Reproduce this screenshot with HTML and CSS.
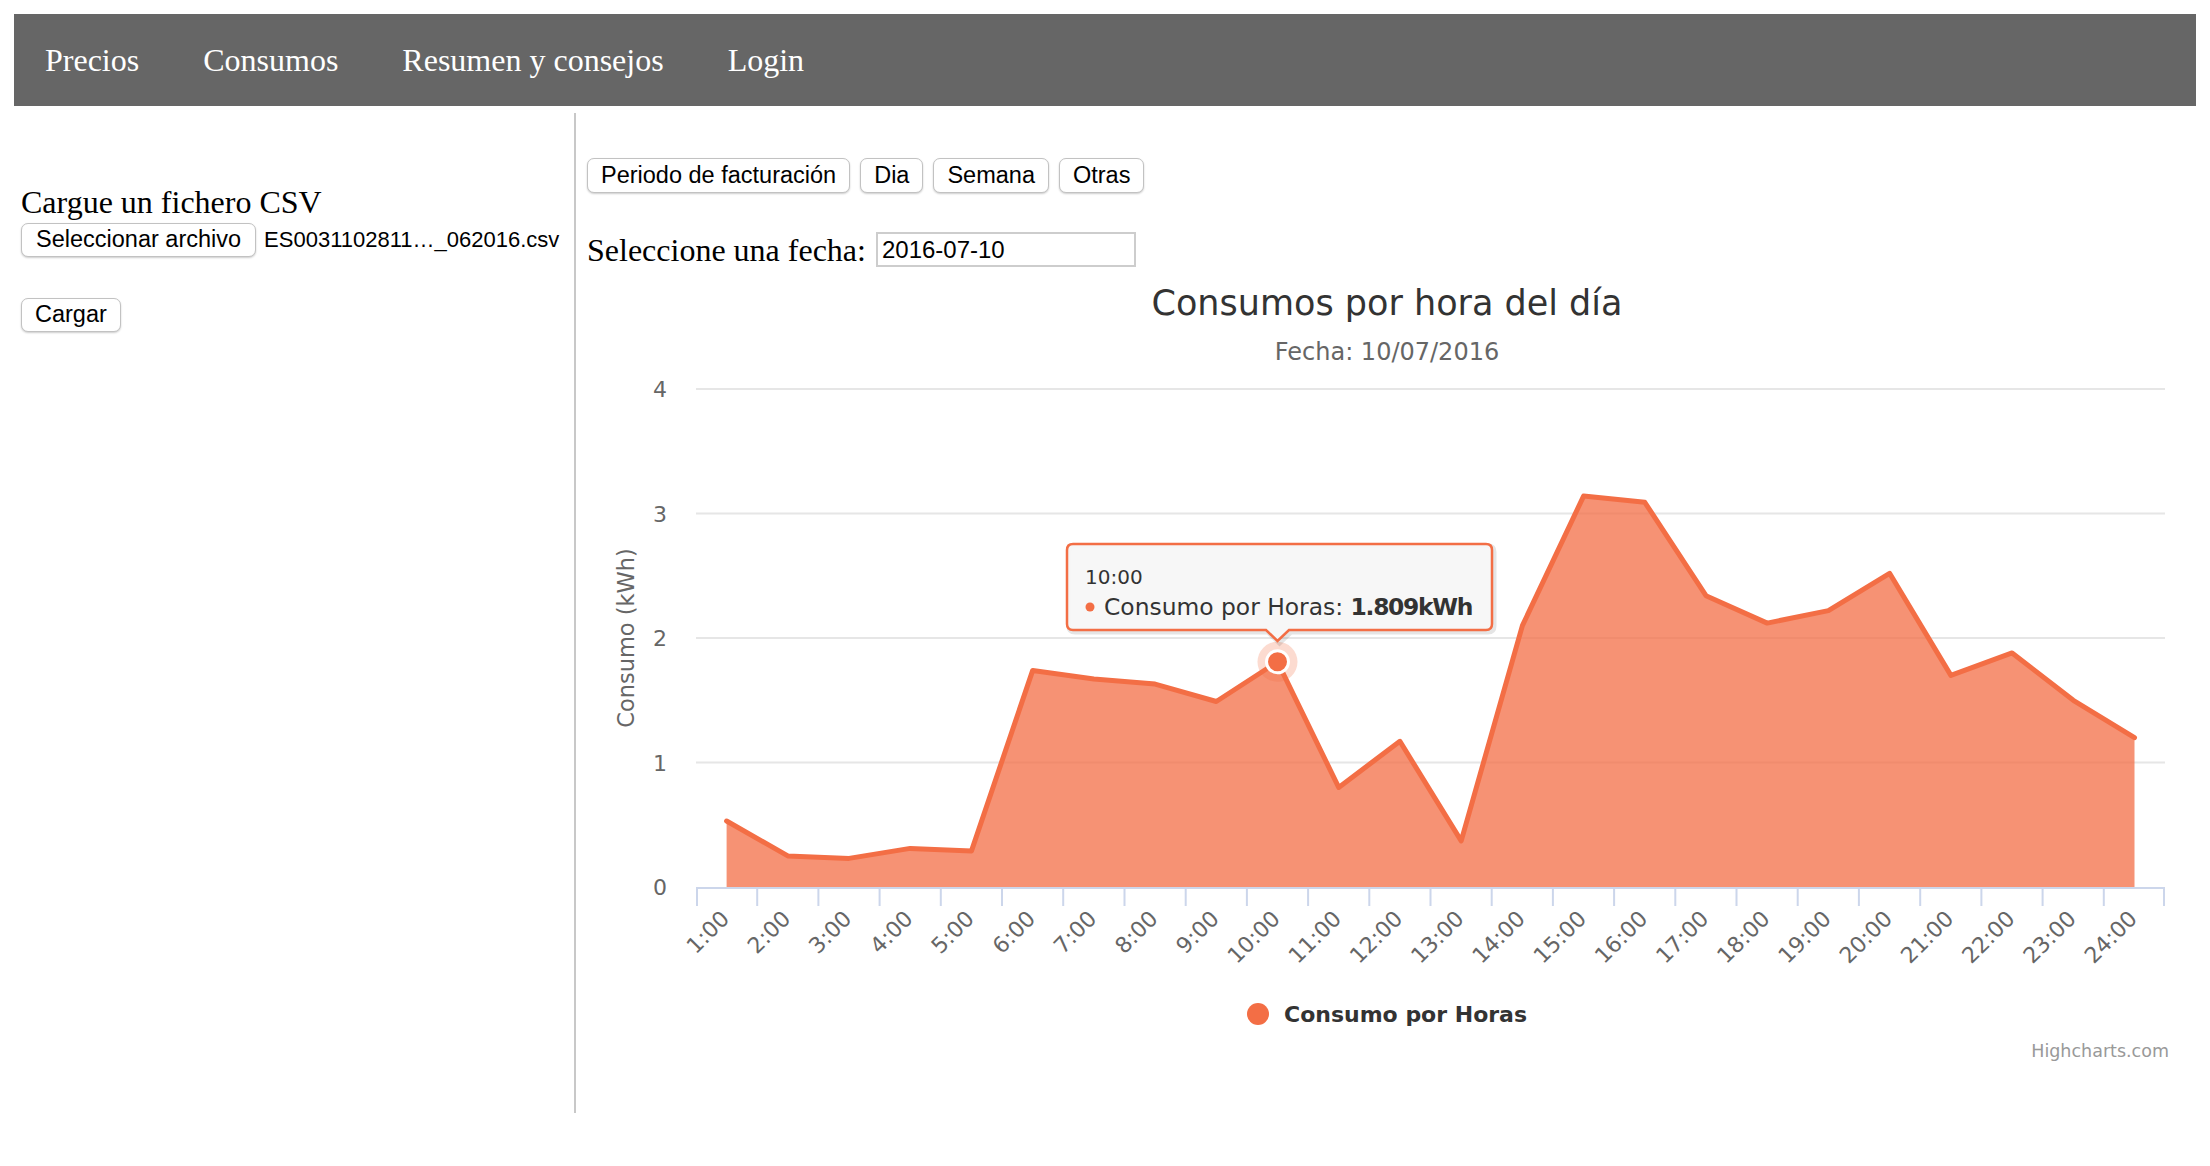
FILE: index.html
```html
<!DOCTYPE html>
<html lang="es">
<head>
<meta charset="utf-8">
<title>Consumos</title>
<link rel="stylesheet" href="styles.css">
</head>
<body>
<nav class="topnav">
  <ul>
    <li>Precios</li>
    <li>Consumos</li>
    <li>Resumen y consejos</li>
    <li>Login</li>
  </ul>
</nav>
<div class="main">
  <aside class="left">
    <p class="upload-label">Cargue un fichero CSV</p>
    <div class="file-row">
      <button class="btn">Seleccionar archivo</button>
      <span class="file-name">ES0031102811…_062016.csv</span>
    </div>
    <button class="btn btn-load">Cargar</button>
  </aside>
  <section class="right">
    <div class="btn-row">
      <button class="btn">Periodo de facturación</button>
      <button class="btn">Dia</button>
      <button class="btn">Semana</button>
      <button class="btn">Otras</button>
    </div>
    <div class="date-row">
      <label class="date-label">Seleccione una fecha:</label>
      <input class="date-input" type="text" value="2016-07-10">
    </div>
    <svg class="chart" width="1604" height="840" viewBox="0 0 1604 840" xmlns="http://www.w3.org/2000/svg">
      <text class="hc-title" x="800" y="46" text-anchor="middle">Consumos por hora del día</text>
      <text class="hc-sub" x="800" y="91" text-anchor="middle">Fecha: 10/07/2016</text>

      <g class="hc-grid">
        <path d="M109 120H1578M109 244.5H1578M109 369H1578M109 493.5H1578"/>
      </g>

      <g class="hc-ylabels">
        <text x="80" y="128" text-anchor="end">4</text>
        <text x="80" y="252.5" text-anchor="end">3</text>
        <text x="80" y="377" text-anchor="end">2</text>
        <text x="80" y="501.5" text-anchor="end">1</text>
        <text x="80" y="626" text-anchor="end">0</text>
      </g>
      <text class="hc-ytitle" x="47" y="369" text-anchor="middle" transform="rotate(-90 47 369)">Consumo (kWh)</text>

      <polygon class="hc-area" points="139.6,618 139.6,552.0 200.8,586.9 262.0,589.4 323.2,579.4 384.5,581.9 445.7,401.4 506.9,410.1 568.1,415.1 629.3,432.5 690.5,392.8 751.7,518.4 812.9,472.3 874.2,571.9 935.4,356.6 996.6,227.1 1057.8,233.3 1119.0,326.7 1180.2,354.1 1241.4,341.6 1302.6,304.3 1363.9,406.4 1425.1,383.9 1486.3,431.3 1547.5,468.6 1547.5,618"/>
      <polyline class="hc-line" points="139.6,552.0 200.8,586.9 262.0,589.4 323.2,579.4 384.5,581.9 445.7,401.4 506.9,410.1 568.1,415.1 629.3,432.5 690.5,392.8 751.7,518.4 812.9,472.3 874.2,571.9 935.4,356.6 996.6,227.1 1057.8,233.3 1119.0,326.7 1180.2,354.1 1241.4,341.6 1302.6,304.3 1363.9,406.4 1425.1,383.9 1486.3,431.3 1547.5,468.6"/>

      <path class="hc-axis" d="M109 619H1578"/>
      <path class="hc-ticks" d="M110 619V637M170.2 619V637M231.4 619V637M292.6 619V637M353.8 619V637M415 619V637M476.2 619V637M537.5 619V637M598.7 619V637M659.9 619V637M721.1 619V637M782.3 619V637M843.5 619V637M904.7 619V637M965.9 619V637M1027.1 619V637M1088.3 619V637M1149.5 619V637M1210.7 619V637M1271.9 619V637M1333.2 619V637M1394.4 619V637M1455.6 619V637M1516.8 619V637M1577 619V637"/>

      <g class="hc-xlabels">
        <text x="143.6" y="651" transform="rotate(-45 143.6 651)">1:00</text>
        <text x="204.8" y="651" transform="rotate(-45 204.8 651)">2:00</text>
        <text x="266.0" y="651" transform="rotate(-45 266.0 651)">3:00</text>
        <text x="327.2" y="651" transform="rotate(-45 327.2 651)">4:00</text>
        <text x="388.5" y="651" transform="rotate(-45 388.5 651)">5:00</text>
        <text x="449.7" y="651" transform="rotate(-45 449.7 651)">6:00</text>
        <text x="510.9" y="651" transform="rotate(-45 510.9 651)">7:00</text>
        <text x="572.1" y="651" transform="rotate(-45 572.1 651)">8:00</text>
        <text x="633.3" y="651" transform="rotate(-45 633.3 651)">9:00</text>
        <text x="694.5" y="651" transform="rotate(-45 694.5 651)">10:00</text>
        <text x="755.7" y="651" transform="rotate(-45 755.7 651)">11:00</text>
        <text x="816.9" y="651" transform="rotate(-45 816.9 651)">12:00</text>
        <text x="878.2" y="651" transform="rotate(-45 878.2 651)">13:00</text>
        <text x="939.4" y="651" transform="rotate(-45 939.4 651)">14:00</text>
        <text x="1000.6" y="651" transform="rotate(-45 1000.6 651)">15:00</text>
        <text x="1061.8" y="651" transform="rotate(-45 1061.8 651)">16:00</text>
        <text x="1123.0" y="651" transform="rotate(-45 1123.0 651)">17:00</text>
        <text x="1184.2" y="651" transform="rotate(-45 1184.2 651)">18:00</text>
        <text x="1245.4" y="651" transform="rotate(-45 1245.4 651)">19:00</text>
        <text x="1306.6" y="651" transform="rotate(-45 1306.6 651)">20:00</text>
        <text x="1367.9" y="651" transform="rotate(-45 1367.9 651)">21:00</text>
        <text x="1429.1" y="651" transform="rotate(-45 1429.1 651)">22:00</text>
        <text x="1490.3" y="651" transform="rotate(-45 1490.3 651)">23:00</text>
        <text x="1551.5" y="651" transform="rotate(-45 1551.5 651)">24:00</text>
      </g>

      <circle class="hc-halo" cx="690.5" cy="392.8" r="20"/>
      <circle class="hc-marker" cx="690.5" cy="392.8" r="11"/>

      <g class="hc-legend">
        <circle cx="671" cy="745" r="11"/>
        <text x="697" y="753">Consumo por Horas</text>
      </g>
      <text class="hc-credits" x="1582" y="788" text-anchor="end">Highcharts.com</text>

      <g class="hc-tooltip">
        <path class="hc-tip-shadow" transform="translate(2 2)" d="M486 275H899Q905 275 905 281V355Q905 361 899 361H702L690.5 372L679 361H486Q480 361 480 355V281Q480 275 486 275Z"/>
        <path class="hc-tip-box" d="M486 275H899Q905 275 905 281V355Q905 361 899 361H702L690.5 372L679 361H486Q480 361 480 355V281Q480 275 486 275Z"/>
        <text class="hc-tip-head" x="498" y="315">10:00</text>
        <circle class="hc-tip-dot" cx="503" cy="338" r="4.5"/>
        <text class="hc-tip-body" x="517" y="346">Consumo por Horas: <tspan class="hc-tip-val">1.809kWh</tspan></text>
      </g>
    </svg>
  </section>
</div>
</body>
</html>
```

FILE: styles.css
```css
html, body {
  background: #fff;
}

body {
  margin: 14px 14px 0 14px;
  font-family: "Liberation Serif", "Times New Roman", serif;
  font-size: 32px;
  color: #000;
}

.topnav {
  background: #666666;
  height: 92px;
}

.topnav ul {
  list-style: none;
  margin: 0;
  padding: 0;
  display: flex;
  align-items: center;
  height: 100%;
}

.topnav li {
  color: #fff;
  padding: 0 33px 0 31px;
  line-height: 36px;
  white-space: nowrap;
}

.main {
  display: flex;
  margin-top: 7px;
  height: 1000px;
}

.left {
  width: 560px;
  flex: none;
  box-sizing: border-box;
  padding-left: 7px;
}

.upload-label {
  margin: 71px 0 3px;
  line-height: 36px;
}

.file-row {
  display: flex;
  align-items: center;
  gap: 8px;
}

.file-name {
  font-family: "Liberation Sans", Arial, sans-serif;
  font-size: 22px;
  color: #000;
}

.btn {
  font-family: "Liberation Sans", Arial, sans-serif;
  font-size: 23.5px;
  line-height: 1;
  height: 34px;
  padding: 0 14px;
  margin: 0;
  color: #000;
  background: #fff;
  border: 1px solid #c2c2c2;
  border-radius: 7px;
  box-shadow: 0 1px 2px rgba(0, 0, 0, 0.2);
  white-space: nowrap;
}

.btn-load {
  display: block;
  margin-top: 41px;
  padding: 0 13px;
}

.right {
  flex: 1;
  border-left: 2px solid #c8c8c8;
  padding-left: 11px;
  min-width: 0;
}

.btn-row {
  display: flex;
  gap: 10px;
  margin-top: 45px;
}

.btn-row .btn {
  height: 35px;
  padding: 0 13px;
}

.date-row {
  display: flex;
  align-items: center;
  margin-top: 39px;
  height: 35px;
}

.date-label {
  margin-right: 10px;
  line-height: 36px;
  white-space: nowrap;
}

.date-input {
  width: 260px;
  height: 35px;
  box-sizing: border-box;
  border: 2px solid #cdcdcd;
  padding: 0 4px;
  margin: 0;
  font-family: "Liberation Sans", Arial, sans-serif;
  font-size: 24px;
  color: #000;
  background: #fff;
  outline: none;
}

.chart {
  display: block;
  margin-top: 2px;
  width: 1604px;
  height: 840px;
}

.chart text {
  font-family: "DejaVu Sans", Verdana, sans-serif;
}

.hc-title {
  font-size: 35px;
  fill: #333333;
}

.hc-sub {
  font-size: 24px;
  fill: #666666;
}

.hc-grid path {
  stroke: #e6e6e6;
  stroke-width: 2;
  fill: none;
}

.hc-ylabels text {
  font-size: 22px;
  fill: #666666;
}

.hc-ytitle {
  font-size: 22.5px;
  fill: #666666;
}

.hc-area {
  fill: #f36e45;
  fill-opacity: 0.75;
  stroke: none;
}

.hc-line {
  fill: none;
  stroke: #f36e45;
  stroke-width: 5;
  stroke-linejoin: round;
  stroke-linecap: round;
}

.hc-axis {
  stroke: #ccd6eb;
  stroke-width: 2;
  fill: none;
}

.hc-ticks {
  stroke: #ccd6eb;
  stroke-width: 2;
  fill: none;
}

.hc-xlabels text {
  font-size: 22px;
  fill: #666666;
  text-anchor: end;
}

.hc-halo {
  fill: #f36e45;
  fill-opacity: 0.25;
}

.hc-marker {
  fill: #f36e45;
  stroke: #ffffff;
  stroke-width: 3;
}

.hc-legend circle {
  fill: #f36e45;
}

.hc-legend text {
  font-size: 22px;
  font-weight: bold;
  fill: #333333;
}

.hc-credits {
  font-size: 17.5px;
  fill: #999999;
}

.hc-tip-shadow {
  fill: none;
  stroke: rgba(0, 0, 0, 0.1);
  stroke-width: 5;
}

.hc-tip-box {
  fill: rgba(247, 247, 247, 0.95);
  stroke: #f36e45;
  stroke-width: 2.5;
}

.hc-tip-head {
  font-size: 20px;
  fill: #333333;
}

.hc-tip-dot {
  fill: #f36e45;
}

.hc-tip-body {
  font-size: 23.4px;
  fill: #333333;
}

.hc-tip-val {
  font-weight: bold;
  letter-spacing: -1.3px;
}
```
